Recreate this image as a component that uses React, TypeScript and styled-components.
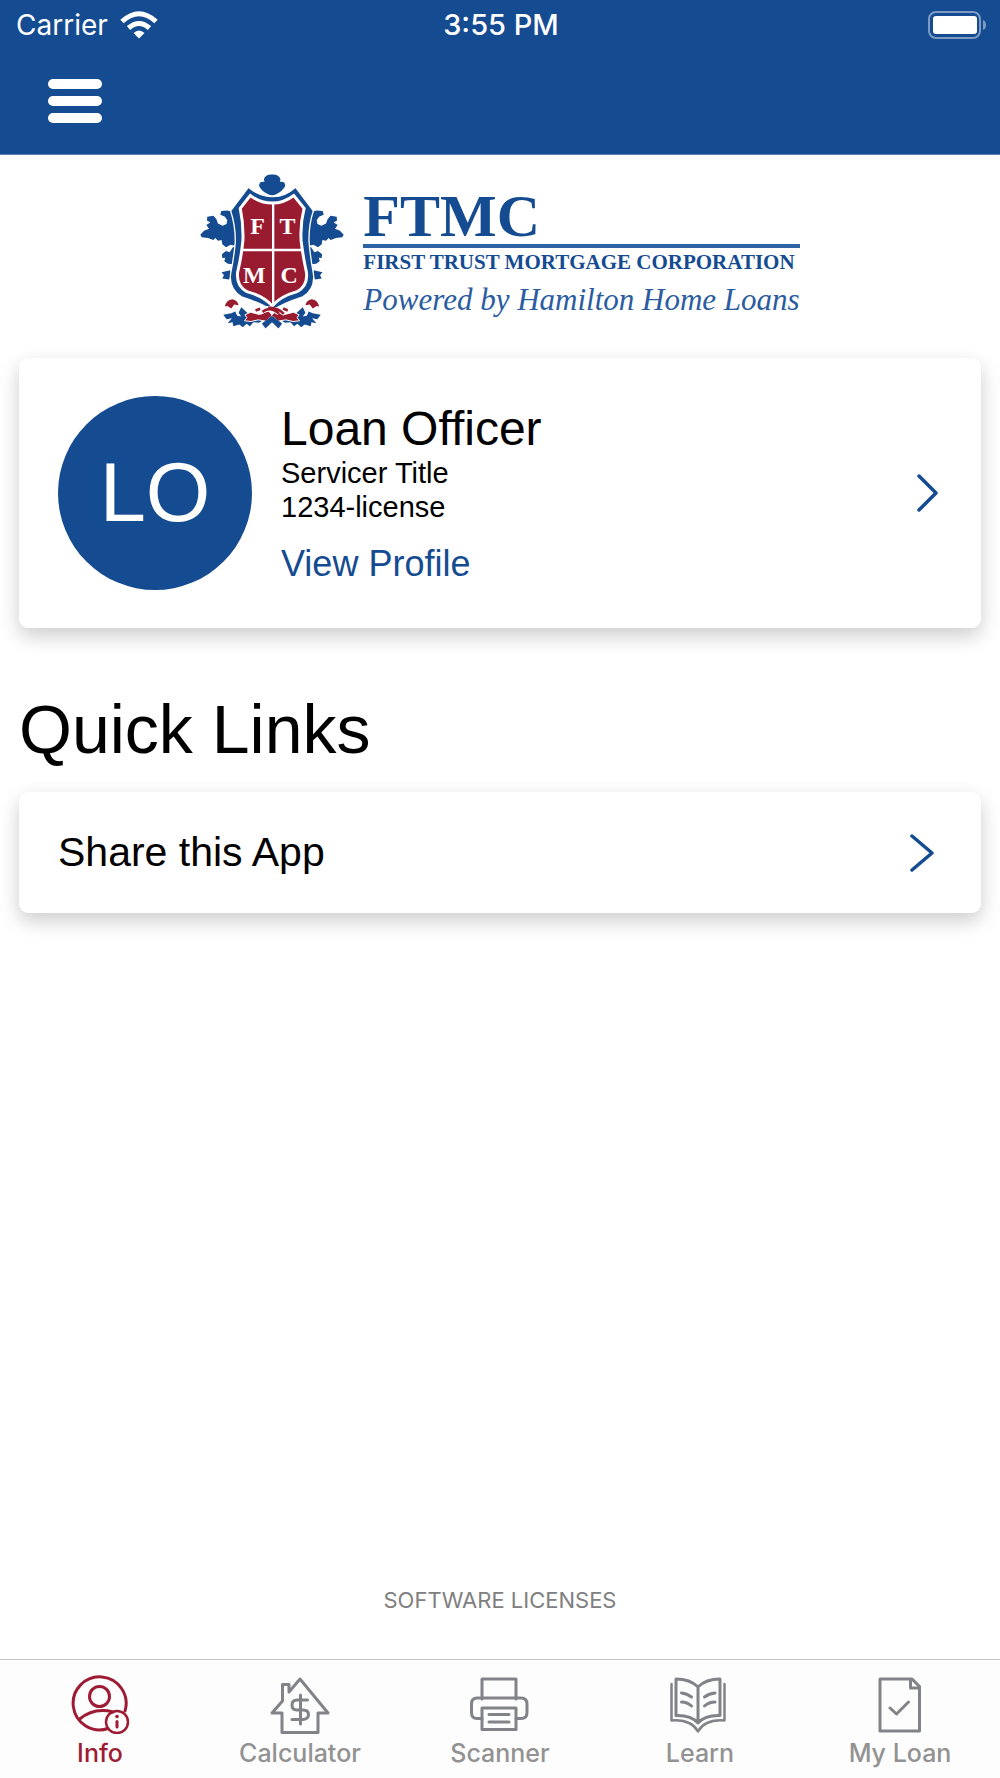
import React from "react";
import styled, { createGlobalStyle } from "styled-components";

const blue = "#154b91";
const red = "#991b30";
const helvetica = `"Liberation Sans", Arial, sans-serif`;
const system = `Inter, "Liberation Sans", sans-serif`;
const serif = `"Liberation Serif", "Times New Roman", serif`;

const GlobalStyle = createGlobalStyle`
  *, *::before, *::after { box-sizing: border-box; }
  body { margin: 0; background: #fff; color: #000; font-family: ${helvetica}; }
  h1, h2, p { margin: 0; font-weight: 400; }
  a { color: inherit; text-decoration: none; }
  svg { display: block; flex: none; }
`;

const Screen = styled.div`
  display: flex;
  flex-direction: column;
  min-height: 100vh;
`;

const Header = styled.header`
  background: ${blue};
  color: #fff;
  border-bottom: 1px solid #5b82b4;
`;

const StatusBar = styled.div`
  display: grid;
  grid-template-columns: 1fr auto 1fr;
  align-items: center;
  height: 50px;
  padding: 0 14px 0 16px;
  font: 400 28px/50px ${system};
`;

const Carrier = styled.div`
  display: flex;
  align-items: center;
  gap: 12px;
`;

const Clock = styled.time`
  font-size: 29px;
  font-weight: 500;
`;

const BatterySlot = styled.div`
  justify-self: end;
`;

const Toolbar = styled.div`
  display: flex;
  align-items: center;
  height: 104px;
  padding: 0 38px 2px;
`;

const MenuButton = styled.button`
  display: flex;
  padding: 10px;
  border: 0;
  background: none;
  color: inherit;
  cursor: pointer;
`;

const Main = styled.main`
  flex: 1;
  display: flex;
  flex-direction: column;
  padding: 0 19px;
`;

const Brand = styled.div`
  display: flex;
  justify-content: center;
  gap: 19px;
  padding: 19px 0 28px;
`;

const Wordmark = styled.div`
  display: flex;
  flex-direction: column;
  padding-top: 14px;
  color: ${blue};
  font-family: ${serif};
  white-space: nowrap;
`;

const BrandName = styled.h1`
  border-bottom: 4px solid #2e63a6;
  font-size: 60px;
  font-weight: 700;
  line-height: 56px;
`;

const BrandLine = styled.p`
  font-size: 21px;
  font-weight: 700;
  line-height: 28px;
`;

const BrandTag = styled.p`
  padding-top: 6px;
  color: #2a5c9f;
  font-size: 31px;
  font-style: italic;
  line-height: 36px;
`;

const Card = styled.a<{ $end: number }>`
  display: flex;
  align-items: center;
  justify-content: space-between;
  padding: 38px ${(p) => p.$end}px 38px 39px;
  border-radius: 9px;
  background: #fff;
  box-shadow: 0 8px 20px rgba(0, 0, 0, 0.2);
`;

const Officer = styled.div`
  display: flex;
  align-items: center;
  gap: 29px;
`;

const Avatar = styled.div`
  display: grid;
  place-items: center;
  width: 194px;
  height: 194px;
  border-radius: 50%;
  background: ${blue};
  color: #fff;
  font-size: 83px;
`;

const OfficerName = styled.h2`
  font-size: 48px;
  line-height: 54px;
`;

const Detail = styled.p`
  font-size: 29px;
  line-height: 34px;
`;

const ProfileLabel = styled.p`
  padding-top: 19px;
  color: ${blue};
  font-size: 36px;
  line-height: 42px;
`;

const SectionTitle = styled.h2`
  padding: 61px 0 23px;
  font-size: 68px;
  line-height: 80px;
`;

const LinkLabel = styled.span`
  font-size: 41px;
  line-height: 45px;
`;

const Licenses = styled.a`
  align-self: center;
  margin-top: auto;
  padding-bottom: 42px;
  color: #808080;
  font: 400 22px/34px ${system};
`;

const TabBar = styled.nav`
  display: grid;
  grid-template-columns: repeat(5, 1fr);
  height: 119px;
  border-top: 1px solid #c4c4c4;
  background: #fdfdfd;
`;

const Tab = styled.a<{ $active?: boolean }>`
  display: flex;
  flex-direction: column;
  align-items: center;
  padding-top: 14px;
  color: ${(p) => (p.$active ? "#9e1b34" : "#929292")};
  font: 500 25px/30px ${system};

  svg {
    color: ${(p) => (p.$active ? "#9e1b34" : "#828388")};
    margin-bottom: 4px;
  }
`;

const WifiIcon = () => (
  <svg width="38" height="28" viewBox="0 0 38 28" fill="none" stroke="#fff" aria-hidden="true">
    <path d="M2 10.500Q19-5 36 10.500" strokeWidth="5" />
    <path d="M8.500 17Q19 8 29.500 17" strokeWidth="5" />
    <path d="M13.500 22Q19 17 24.500 22L19 27.500Z" fill="#fff" stroke="none" />
  </svg>
);

const BatteryIcon = () => (
  <svg width="58" height="28" viewBox="0 0 58 28" aria-label="Battery full" role="img">
    <rect x="1" y="1" width="51" height="26" rx="7" fill="none" stroke="#7d9bc2" strokeWidth="2" />
    <rect x="5" y="5" width="44" height="18" rx="3" fill="#fff" />
    <path d="M55 9Q58 10 58 14T55 19Z" fill="#7d9bc2" />
  </svg>
);

const MenuIcon = () => (
  <svg width="54" height="44" viewBox="0 0 54 44" fill="#fff" aria-hidden="true">
    <rect width="54" height="10" rx="5" />
    <rect y="17" width="54" height="10" rx="5" />
    <rect y="34" width="54" height="10" rx="5" />
  </svg>
);

const CrestSide = () => (
  <g>
    <path
      fill={blue}
      d="M122 153L108 149L90 151L87 162L100 167L108 178L106 190L94 195L80 188L75 175L66 165L48 168L47 179L57 185L45 193L53 204L38 210L27 222L31 230L50 232L66 238L72 232L80 240L91 238L93 251L104 260L118 252L135 256V170Z"
    />
    <path fill={blue} d="M126 258L115 275L104 271L92 281L93 292L102 291L99 302L110 309L124 311L135 268Z" />
    <path fill={blue} d="M117 329L91 335L98 344L93 354L113 357L121 342Z" />
    <path
      fill={blue}
      d="M150 440L142 457L150 468L138 466L132 453L120 458L96 463L106 476L122 473L109 488L124 485L126 497L144 492L155 500L166 490L176 497L187 485L203 487L243 465L220 455L183 470Z"
    />
    <path
      fill={red}
      d="M101 438Q104 419 123 416Q139 419 142 434L129 432L120 444L108 436Z"
    />
    <path
      fill={red}
      stroke="#fff"
      strokeWidth="3"
      d="M161 463L178 455L205 462L232 451L244 465L224 482L201 478L179 483L160 481L167 471Z"
    />
    <path fill={blue} d="M212 489L243 466L248 480L223 504Z" />
  </g>
);

const Crest = () => (
  <svg width="144" height="156" viewBox="26 40 433 468" aria-hidden="true">
    <CrestSide />
    <g transform="translate(485 0) scale(-1 1)">
      <CrestSide />
    </g>
    <path
      fill={blue}
      stroke="#fff"
      strokeWidth="4"
      d="M172 79Q205 108 243 107Q282 108 313 79L367 150Q352 195 354 245Q358 290 367 340Q373 385 335 409Q270 430 243 451Q216 430 151 409Q112 385 118 340Q128 290 132 245Q133 195 118 150Z"
    />
    <path
      fill={red}
      stroke="#fff"
      strokeWidth="9"
      d="M177 104Q208 127 243 127Q278 127 308 104L339 143Q327 190 330 240Q336 290 346 335Q351 376 318 393Q267 407 243 436Q218 407 167 393Q135 376 139 335Q150 290 155 240Q157 190 147 143Z"
    />
    <path d="M246 127V436M154 268H333" stroke="#fff" strokeWidth="7" fill="none" />
    <path
      fill={blue}
      d="M243 41Q264 40 268 55L266 63Q283 60 282 76Q275 90 255 100Q243 106 231 100Q210 90 204 76Q203 60 220 63L218 55Q222 40 243 41Z"
    />
    <path
      d="M193 450L207 445M207 457Q235 435 263 459M225 443Q252 439 280 461M276 444L292 450"
      stroke="#fff"
      strokeWidth="12"
      fill="none"
    />
    <path
      d="M193 450L207 445M214 454Q237 435 263 459M231 442Q258 439 278 460M276 444L290 450"
      stroke={red}
      strokeWidth="8"
      fill="none"
    />
    <g fill="#fff" fontFamily={serif} fontSize="72" fontWeight="700" textAnchor="middle">
      <text x="199" y="219">F</text>
      <text x="289" y="219">T</text>
      <text x="189" y="367">M</text>
      <text x="294" y="367">C</text>
    </g>
  </svg>
);

const Chevron = ({ width }: { width: number }) => (
  <svg
    width={width}
    height="38"
    viewBox={`0 0 ${width} 38`}
    fill="none"
    stroke={blue}
    strokeWidth="3.500"
    strokeLinecap="round"
    strokeLinejoin="round"
    aria-hidden="true"
  >
    <path d={`M2 2L${width - 2} 19L2 36`} />
  </svg>
);

const TabIcon = ({ children }: { children: React.ReactNode }) => (
  <svg
    width="60"
    height="60"
    viewBox="0 0 60 60"
    fill="none"
    stroke="currentColor"
    strokeWidth="3"
    strokeLinecap="round"
    strokeLinejoin="round"
    aria-hidden="true"
  >
    {children}
  </svg>
);

const tabs = [
  {
    label: "Info",
    icon: (
      <>
        <path d="M38 54.500A26.500 26.500 0 1 1 55 37" />
        <circle cx="29.500" cy="22.500" r="10" />
        <path d="M9 45.500Q24 33 43 38" />
        <circle cx="47" cy="48" r="11" strokeWidth="2.500" />
        <path d="M47 47.500V53" />
        <circle cx="47" cy="42.500" r="1.800" fill="currentColor" stroke="none" />
      </>
    ),
  },
  {
    label: "Calculator",
    icon: (
      <>
        <path d="M30 5L58 39H48V58.500H12V39H2L12.500 27V10.500H19V18Z" />
        <path d="M37.500 26H27Q22 26 22 31T27 36H33Q38.500 36 38.500 40.500T33 45.500H22M30.500 21V50" />
      </>
    ),
  },
  {
    label: "Scanner",
    icon: (
      <>
        <path d="M12 25V5H46V25M12 44.500H7Q1.500 44.500 1.500 38.500V30Q1.500 24 7 24H51Q57 24 57 30V38.500Q57 44.500 51 44.500H46" />
        <path d="M12 34H46V55.500H12ZM19 40.500H39M19 48H39" />
      </>
    ),
  },
  {
    label: "Learn",
    icon: (
      <>
        <path d="M28 13Q20 5 6 5V41.500Q21 41 28 49Q35 41 50 41.500V5Q36 5 28 13V49" />
        <path d="M1.500 10V46.500Q21 45 28 57.500Q35 45 54.500 46.500V10" strokeWidth="2.500" />
        <path d="M11.500 19Q17 19.500 21.500 23M11.500 28Q17 28 21.500 32M34.500 23Q39 19.500 45 19M34.500 32Q39 28 45 28" />
      </>
    ),
  },
  {
    label: "My Loan",
    icon: (
      <>
        <path d="M10 5H42L49.500 12.500V57H10ZM40.500 5V14H49" />
        <path d="M20 34L26.500 40L38.500 28" />
      </>
    ),
  },
];

export default function App() {
  return (
    <Screen>
      <GlobalStyle />
      <Header>
        <StatusBar>
          <Carrier>
            <span>Carrier</span>
            <WifiIcon />
          </Carrier>
          <Clock>3:55 PM</Clock>
          <BatterySlot>
            <BatteryIcon />
          </BatterySlot>
        </StatusBar>
        <Toolbar>
          <MenuButton type="button" aria-label="Menu">
            <MenuIcon />
          </MenuButton>
        </Toolbar>
      </Header>
      <Main>
        <Brand>
          <Crest />
          <Wordmark>
            <BrandName>FTMC</BrandName>
            <BrandLine>FIRST TRUST MORTGAGE CORPORATION</BrandLine>
            <BrandTag>Powered by Hamilton Home Loans</BrandTag>
          </Wordmark>
        </Brand>
        <Card href="#profile" $end={43}>
          <Officer>
            <Avatar>LO</Avatar>
            <div>
              <OfficerName>Loan Officer</OfficerName>
              <Detail>Servicer Title</Detail>
              <Detail>1234-license</Detail>
              <ProfileLabel>View Profile</ProfileLabel>
            </div>
          </Officer>
          <Chevron width={21} />
        </Card>
        <SectionTitle>Quick Links</SectionTitle>
        <Card href="#share" $end={47}>
          <LinkLabel>Share this App</LinkLabel>
          <Chevron width={24} />
        </Card>
        <Licenses href="#licenses">SOFTWARE LICENSES</Licenses>
      </Main>
      <TabBar>
        {tabs.map(({ label, icon }, index) => (
          <Tab key={label} href={`#tab-${index}`} $active={index === 0}>
            <TabIcon>{icon}</TabIcon>
            {label}
          </Tab>
        ))}
      </TabBar>
    </Screen>
  );
}
